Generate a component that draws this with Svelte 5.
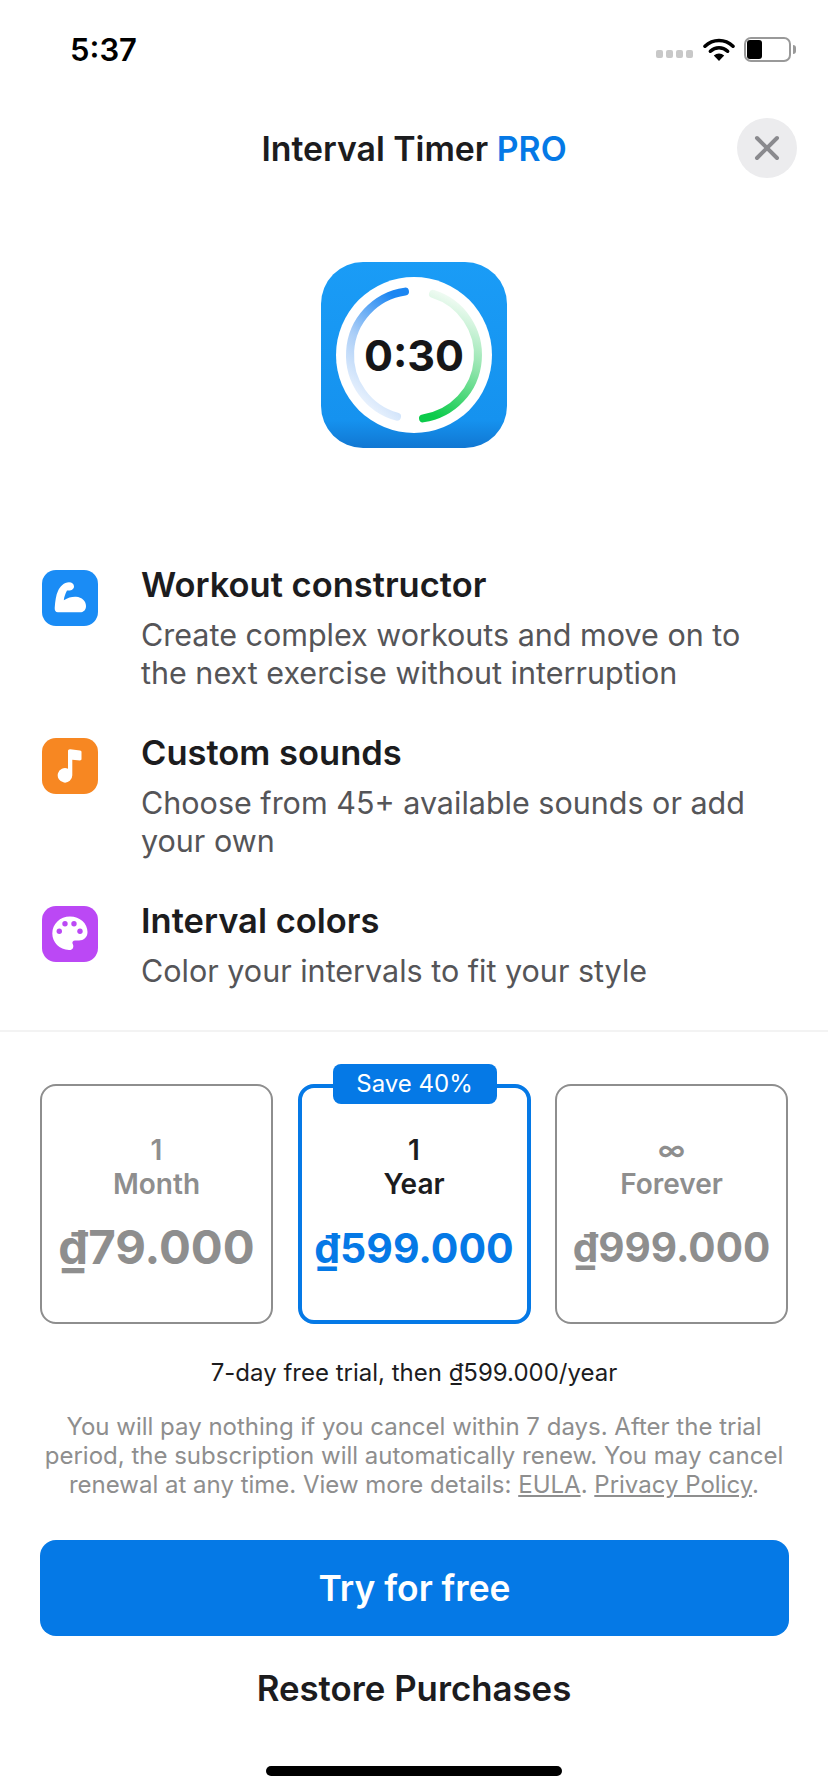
<script>
  const features = [
    { title: 'Workout constructor', text: ['Create complex workouts and move on to', 'the next exercise without interruption'], kind: 'arm' },
    { title: 'Custom sounds', text: ['Choose from 45+ available sounds or add', 'your own'], kind: 'note' },
    { title: 'Interval colors', text: ['Color your intervals to fit your style'], kind: 'palette' }
  ];
  const plans = [
    { n: '1', unit: 'Month', price: '₫79.000', size: 'big' },
    { n: '1', unit: 'Year', price: '₫599.000', on: true, size: 'mid' },
    { n: '∞', unit: 'Forever', price: '₫999.000', size: 'low' }
  ];
</script>

<div class="page">
  <div class="status">
    <span class="time">5:37</span>
    <div class="sys">
      <span class="dots"><i></i><i></i><i></i><i></i></span>
      <svg class="wifi" width="32" height="24" viewBox="0 0 32 24" aria-hidden="true">
        <path d="M2 9.2 C10 1.6 22 1.6 30 9.2" fill="none" stroke="#000" stroke-width="3.6" stroke-linecap="round"/>
        <path d="M7.4 14.2 C12.4 9.6 19.6 9.6 24.6 14.2" fill="none" stroke="#000" stroke-width="3.6" stroke-linecap="round"/>
        <path d="M16 24 L10.8 18.6 C13.8 15.9 18.2 15.9 21.2 18.6 Z" fill="#000"/>
      </svg>
      <span class="batt"><b></b></span><span class="tip"></span>
    </div>
  </div>

  <header class="head">
    <h1>Interval Timer <em>PRO</em></h1>
    <button class="close" aria-label="Close">
      <svg width="28" height="28" viewBox="0 0 28 28"><path d="M4 4 L24 24 M24 4 L4 24" stroke="#8a8a8e" stroke-width="4" stroke-linecap="round"/></svg>
    </button>
  </header>

  <div class="logo">
    <svg width="188" height="188" viewBox="0 0 188 188" aria-hidden="true">
      <defs>
        <linearGradient id="bg" x1="0" y1="0" x2="0" y2="1">
          <stop offset="0" stop-color="#1a9cf6"/><stop offset="0.85" stop-color="#1592ef"/><stop offset="1" stop-color="#1177d2"/>
        </linearGradient>
        <linearGradient id="blue" x1="0.7" y1="0" x2="0.3" y2="1">
          <stop offset="0" stop-color="#1b86f2"/><stop offset="0.5" stop-color="#a9cdf7"/><stop offset="1" stop-color="#f4f8fe"/>
        </linearGradient>
        <linearGradient id="green" x1="0.3" y1="1" x2="0.5" y2="0">
          <stop offset="0" stop-color="#0ccb4a"/><stop offset="0.5" stop-color="#8fe4ab"/><stop offset="1" stop-color="#f4fcf6"/>
        </linearGradient>
      </defs>
      <rect x="1" y="1" width="186" height="186" rx="42" fill="url(#bg)"/>
      <circle cx="94" cy="94" r="78" fill="#fff"/>
      <path d="M 85 30.64 A 64 64 0 0 0 77 155.7" fill="none" stroke="url(#blue)" stroke-width="8" stroke-linecap="round"/>
      <path d="M 103 157.36 A 64 64 0 0 0 113 32.9" fill="none" stroke="url(#green)" stroke-width="8" stroke-linecap="round"/>
      <text x="94" y="110" text-anchor="middle" class="clock">0:30</text>
    </svg>
  </div>

  <section class="features">
    {#each features as f}
      <article class="feature">
        <span class="ico {f.kind}">
          <svg width="56" height="56" viewBox="0 0 56 56" aria-hidden="true">
            {#if f.kind === 'arm'}
              <path fill="#fff" d="M27 12.3 C30 12.3 32 14 32 16.5 C32 19 29.5 20.5 27 20.5 L25 20.5 C23.2 24 22.2 27 21.8 30.3 C26 27.5 30 26.5 34 26.7 C40 27 44 31 44 36 C44 40 41.5 42.3 38 42.3 L16 42.3 C13.5 42.3 12.5 40 12.7 38 C13.2 31 14 25 16 21 C18 16.5 22 12.3 27 12.3Z"/>
            {:else if f.kind === 'note'}
              <path fill="#fff" d="M26 13 C26 11.8 27 11 28.3 11.2 L38 12.4 C39 12.5 39.5 13.2 39.5 14 L39.5 21 C39.5 22 38.7 22.4 38 22.4 L30.3 21.8 L30.3 37.3 A7.3 7.3 0 1 1 26 30.7 Z"/>
            {:else}
              <path fill="#fff" d="M28 10.5 C38 10.5 45.5 17.5 45.5 26 C45.5 31.5 41.5 34.5 37 34.5 L33 34.5 C31 34.5 30 36 30.5 37.5 C31.5 39 31.5 40.5 31 42 C30 43.8 28.5 44.2 27 44 C17.5 43.5 10.3 36.5 10.3 27.5 C10.3 18 18 10.5 28 10.5Z"/>
              <g fill="#bb48f5"><circle cx="17.3" cy="25.3" r="2.7"/><circle cx="23" cy="17.7" r="2.7"/><circle cx="32" cy="17.7" r="2.7"/><circle cx="38" cy="25.3" r="2.7"/></g>
            {/if}
          </svg>
        </span>
        <div class="copy">
          <h2>{f.title}</h2>
          {#each f.text as line}<p>{line}</p>{/each}
        </div>
      </article>
    {/each}
  </section>

  <section class="plans">
    {#each plans as p}
      <div class="plan" class:on={p.on}>
        {#if p.on}<span class="badge">Save 40%</span>{/if}
        <span class="n">{p.n}</span>
        <span class="unit">{p.unit}</span>
        <span class="price {p.size}">{p.price}</span>
      </div>
    {/each}
  </section>

  <p class="trial">7-day free trial, then ₫599.000/year</p>
  <p class="fine">You will pay nothing if you cancel within 7 days. After the trial<br>period, the subscription will automatically renew. You may cancel<br>renewal at any time. View more details: <u>EULA</u>. <u>Privacy Policy</u>.</p>

  <button class="cta">Try for free</button>
  <button class="restore">Restore Purchases</button>
  <div class="home"></div>
</div>

<style>
  :global(body) { margin: 0; background: #fff; }
  .page {
    width: 828px; height: 1792px; overflow: hidden; background: #fff;
    display: flex; flex-direction: column;
    font-family: Inter, "Liberation Sans", sans-serif; color: #1c1c1e;
  }
  h1, h2, p { margin: 0; }
  button { font: inherit; border: 0; padding: 0; background: none; color: inherit; }

  .status { height: 98px; padding: 0 32px 0 70px; display: flex; justify-content: space-between; align-items: center; }
  .time { font-size: 31px; font-weight: 600; color: #000; }
  .sys { display: flex; align-items: center; }
  .dots { display: flex; gap: 3px; margin: 10px 10px 0 0; }
  .dots i { width: 7px; height: 8px; border-radius: 2px; background: #c8c8c8; }
  .batt { box-sizing: border-box; width: 47px; height: 25px; margin-left: 9px; border: 2px solid #999; border-radius: 7px; padding: 1px; display: flex; }
  .batt b { width: 15px; background: #000; border-radius: 3px; }
  .tip { width: 3px; height: 9px; background: #999; border-radius: 0 3px 3px 0; margin-left: 2px; }

  .head { position: relative; height: 60px; margin-top: 20px; display: flex; align-items: center; justify-content: center; }
  h1 { font-size: 33.8px; font-weight: 600; }
  h1 em { font-style: normal; color: #0579e6; }
  .close { position: absolute; right: 31px; top: 0; width: 60px; height: 60px; border-radius: 50%; background: #ececee; display: flex; align-items: center; justify-content: center; }

  .logo { margin-top: 83px; display: flex; justify-content: center; }
  .logo svg { display: block; }
  .clock { font-size: 43px; font-weight: 700; fill: #161618; font-family: Inter, sans-serif; }

  .features { margin-top: 114px; padding: 0 42px; display: flex; flex-direction: column; gap: 39px; }
  .feature { display: flex; gap: 43px; }
  .ico { flex: none; width: 56px; height: 56px; margin-top: 7px; border-radius: 14px; }
  .ico svg { display: block; }
  .arm { background: #1a8cf5; }
  .note { background: #f78722; }
  .palette { background: #bb48f5; }
  .copy h2 { font-size: 34.5px; line-height: 44px; font-weight: 600; margin-bottom: 9px; }
  .copy p { font-size: 30.5px; line-height: 38px; color: #555558; }

  .plans {
    margin-top: 40px; padding: 52px 0 0 40px; border-top: 2px solid #f3f3f3;
    display: grid; grid-template-columns: repeat(3, 233px); column-gap: 24.5px;
  }
  .plan {
    position: relative; box-sizing: border-box; height: 240px; border: 2px solid #8e8e8e; border-radius: 16px;
    display: flex; flex-direction: column; align-items: center; padding-top: 47px; color: #8e8e8e;
  }
  .plan.on { border: 4px solid #0579e6; padding-top: 45px; color: #1c1c1e; }
  .n, .unit { font-size: 28px; line-height: 34px; font-weight: 600; }
  .price { margin-top: 21px; font-size: 41px; line-height: 52px; font-weight: 700; }
  .price.big { font-size: 47.3px; margin-top: 20px; }
  .price.low { font-size: 40.5px; }
  .on .price { color: #0579e6; }
  .badge {
    position: absolute; left: 31px; top: -24px; width: 164px; height: 40px; border-radius: 8px;
    background: #0579e6; color: #fff; font-size: 24px; line-height: 40px; text-align: center;
  }

  .trial { margin-top: 34px; text-align: center; font-size: 24px; line-height: 30px; }
  .fine { margin-top: 24px; text-align: center; font-size: 24px; line-height: 29px; color: #8e8e8e; }

  .cta { margin: 41px 39px 0 40px; height: 96px; border-radius: 16px; background: #0579e6; color: #fff; font-size: 35.4px; font-weight: 600; }
  .restore { margin-top: 24px; height: 56px; font-size: 34.8px; font-weight: 600; }
  .home { align-self: center; margin-top: 50px; width: 296px; height: 10px; border-radius: 5px; background: #000; }
</style>
